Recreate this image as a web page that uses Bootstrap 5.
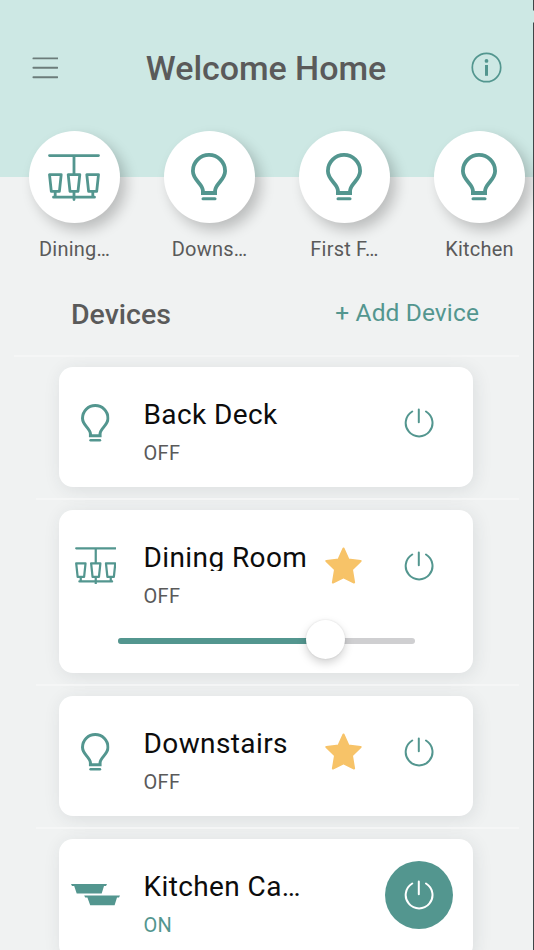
<!DOCTYPE html>
<html lang="en">
<head>
<meta charset="utf-8">
<meta name="viewport" content="width=device-width, initial-scale=1">
<title>Welcome Home</title>
<link href="https://cdn.jsdelivr.net/npm/bootstrap@5.3.0/dist/css/bootstrap.min.css" rel="stylesheet">
<style>
:root{--teal:#53968f;--ink:#5a5a5a}
body{font-family:Roboto,"Liberation Sans",sans-serif;background:#f0f2f2;color:var(--ink);height:950px;overflow:hidden}
svg{display:block;flex:none}
.screen{width:534px;height:950px}
.screen-edge{top:0;right:0;width:1px;height:950px;background:linear-gradient(#3f4547 0 10px,#cde8e4 11px 22px,#3f4547 23px)}
.hero{height:177px;background:#cde8e4;padding:37px 32px 0 32px}
.hero-row{height:61px}
.hero-title{font-size:34px;font-weight:500;line-height:60px;letter-spacing:-.05px;padding:0 0 0 3px}
.rooms{margin-top:-46px;padding-left:7px;width:560px}
.room{width:135px}
.room-disc{width:91px;height:92px;padding:0 1px 0 0;background:#fff;box-shadow:6px 7px 14px rgba(0,0,0,.22)}
.room-label{font-size:20px;line-height:24px;margin-top:14px;letter-spacing:.2px}
.devices-head{height:94px;padding:9px 55px 0 71px}
.devices-title{font-size:28.5px;font-weight:500;line-height:34px;margin-top:5px}
.add-link{font-size:24.5px;line-height:34px;letter-spacing:.12px;color:var(--teal);margin-top:1px}
.device-row{border-top:2px solid #f5f6f6;margin:0 15px 0 36px;padding:10px 46px 11px 23px}
.device-row:first-child{margin-left:14px;padding-left:45px}
.device{border-radius:14px;background:#fff;box-shadow:2px 3px 18px rgba(40,50,60,.1);height:120px}
.device.dimmable{height:163px}
.device-main{height:111px}
.device-icon{width:73px}
.device-text{width:176px;margin-left:11.5px;padding-top:33.5px}
.device-name{font-size:28px;line-height:27.5px;color:#0c0c0c;white-space:nowrap;letter-spacing:.4px}
.dimmable .device-name{overflow:hidden}
.device-state{font-size:20px;line-height:24px;margin-top:12.5px;letter-spacing:.3px}
.is-on{color:var(--teal)}
.star-slot{width:52px;margin-left:-2px}
.power-btn{width:68px;height:68px;margin-right:20px;color:var(--teal)}
.power-btn.active-power{background:var(--teal);color:#fff}
.dimmer{height:6px;margin:16.5px 58px 0 59px;background:#cfcfd1;border-radius:3px}
.dimmer-fill{height:6px;background:var(--teal);border-radius:3px}
.knob{right:-19.5px;top:-18px;width:39px;height:39px;background:#fff;box-shadow:0 4px 10px rgba(0,0,0,.18),0 0 2px rgba(0,0,0,.12)}
</style>
</head>
<body>
<svg width="0" height="0" class="position-absolute" aria-hidden="true">
  <symbol id="bulb" viewBox="0 0 36 48"><g fill="none" stroke="#53968f" stroke-width="3.8"><path d="M11.9 40V37.5C11.4 30.5 1.9 27 1.9 18a16.1 16.1 0 0 1 32.2 0C34.1 27 24.6 30.5 24.1 37.5V40Z"/><path d="M12 45.8H24" stroke-width="3" stroke-linecap="round"/></g></symbol>
  <symbol id="chandelier" viewBox="0 0 52 47"><g fill="none" stroke="#53968f" stroke-width="2.8" stroke-linecap="round" stroke-linejoin="round"><path d="M1.5 1.6H50.5M26 1.6V20M5.5 43.2H46.5M7.2 38V43M44.8 38V43M26 38V45.6"/><path d="M1.5 20.6H13.2L11.4 37.4H3.3ZM20.2 20.6H31.8L30 37.4H22ZM38.8 20.6H50.5L48.7 37.4H40.6Z"/></g></symbol>
  <symbol id="power" viewBox="0 0 30 30"><g fill="none" stroke="currentColor" stroke-width="2" stroke-linecap="round"><path d="M8.2 3.5A13.4 13.4 0 1 0 22 3.5M14.8 1.6V14.2"/></g></symbol>
  <symbol id="star" viewBox="0 0 36 36"><path d="M18 1.5L22.8 12.2L34.7 13.6L26.2 21.8L28.3 34.5L18 29.4L7.7 34.5L9.8 21.8L1.3 13.6L13.2 12.2Z" fill="#f7c368" stroke="#f7c368" stroke-width="2" stroke-linejoin="round"/></symbol>
  <symbol id="cabinet" viewBox="0 0 49 22"><path d="M0 0H36L35 2H33L30.7 9.5H5.7L3.2 2H1ZM13.2 11.5H49L48 13.5H46L43.6 21.3H19.2L16.4 13.5H14.2Z" fill="#53968f"/></symbol>
</svg>
<div class="screen position-relative overflow-hidden">
  <header class="hero">
    <div class="hero-row d-flex align-items-center justify-content-between">
      <svg width="26" height="22" viewBox="0 0 26 22"><path d="M1.4 1.4H25.4M1.4 10.8H25.4M1.4 20.2H25.4" stroke="#6c7c7a" stroke-width="1.9" stroke-linecap="round"/></svg>
      <h1 class="hero-title m-0">Welcome Home</h1>
      <svg width="31" height="31" viewBox="0 0 31 31"><circle cx="15.5" cy="15.5" r="14.2" fill="none" stroke="#53968f" stroke-width="1.7"/><circle cx="15.5" cy="8.9" r="1.9" fill="#53968f"/><path d="M15.5 13V23.8" stroke="#53968f" stroke-width="3"/></svg>
    </div>
  </header>
  <nav class="rooms d-flex">
    <div class="room d-flex flex-column align-items-center"><div class="room-disc rounded-circle d-flex align-items-center justify-content-center"><svg width="52" height="47"><use href="#chandelier"/></svg></div><div class="room-label">Dining…</div></div>
    <div class="room d-flex flex-column align-items-center"><div class="room-disc rounded-circle d-flex align-items-center justify-content-center"><svg width="36" height="48"><use href="#bulb"/></svg></div><div class="room-label">Downs…</div></div>
    <div class="room d-flex flex-column align-items-center"><div class="room-disc rounded-circle d-flex align-items-center justify-content-center"><svg width="36" height="48"><use href="#bulb"/></svg></div><div class="room-label">First F…</div></div>
    <div class="room d-flex flex-column align-items-center"><div class="room-disc rounded-circle d-flex align-items-center justify-content-center"><svg width="36" height="48"><use href="#bulb"/></svg></div><div class="room-label">Kitchen</div></div>
  </nav>
  <div class="devices-head d-flex align-items-center justify-content-between">
    <h2 class="devices-title mb-0">Devices</h2>
    <a class="add-link text-decoration-none" href="#">+ Add Device</a>
  </div>
  <main>
    <div class="device-row"><div class="device"><div class="device-main d-flex align-items-center">
      <div class="device-icon d-flex justify-content-center"><svg width="28.5" height="38"><use href="#bulb"/></svg></div>
      <div class="device-text align-self-start"><div class="device-name">Back Deck</div><div class="device-state">OFF</div></div>
      <div class="power-btn rounded-circle ms-auto d-flex align-items-center justify-content-center"><svg width="30" height="30"><use href="#power"/></svg></div>
    </div></div></div>
    <div class="device-row"><div class="device dimmable"><div class="device-main d-flex align-items-center">
      <div class="device-icon d-flex justify-content-center"><svg width="41.5" height="37.5"><use href="#chandelier"/></svg></div>
      <div class="device-text align-self-start"><div class="device-name">Dining Room</div><div class="device-state">OFF</div></div>
      <div class="star-slot d-flex justify-content-center"><svg width="37" height="37"><use href="#star"/></svg></div>
      <div class="power-btn rounded-circle ms-auto d-flex align-items-center justify-content-center"><svg width="30" height="30"><use href="#power"/></svg></div>
    </div>
    <div class="dimmer"><div class="dimmer-fill position-relative" style="width:70%"><div class="knob rounded-circle position-absolute"></div></div></div>
    </div></div>
    <div class="device-row"><div class="device"><div class="device-main d-flex align-items-center">
      <div class="device-icon d-flex justify-content-center"><svg width="28.5" height="38"><use href="#bulb"/></svg></div>
      <div class="device-text align-self-start"><div class="device-name">Downstairs</div><div class="device-state">OFF</div></div>
      <div class="star-slot d-flex justify-content-center"><svg width="37" height="37"><use href="#star"/></svg></div>
      <div class="power-btn rounded-circle ms-auto d-flex align-items-center justify-content-center"><svg width="30" height="30"><use href="#power"/></svg></div>
    </div></div></div>
    <div class="device-row"><div class="device"><div class="device-main d-flex align-items-center">
      <div class="device-icon d-flex justify-content-center"><svg width="49" height="22"><use href="#cabinet"/></svg></div>
      <div class="device-text align-self-start"><div class="device-name">Kitchen Ca…</div><div class="device-state is-on">ON</div></div>
      <div class="power-btn active-power rounded-circle ms-auto d-flex align-items-center justify-content-center"><svg width="30" height="30"><use href="#power"/></svg></div>
    </div></div></div>
  </main>
  <div class="screen-edge position-absolute"></div>
</div>
<script src="https://cdn.jsdelivr.net/npm/bootstrap@5.3.0/dist/js/bootstrap.bundle.min.js"></script>
</body>
</html>
